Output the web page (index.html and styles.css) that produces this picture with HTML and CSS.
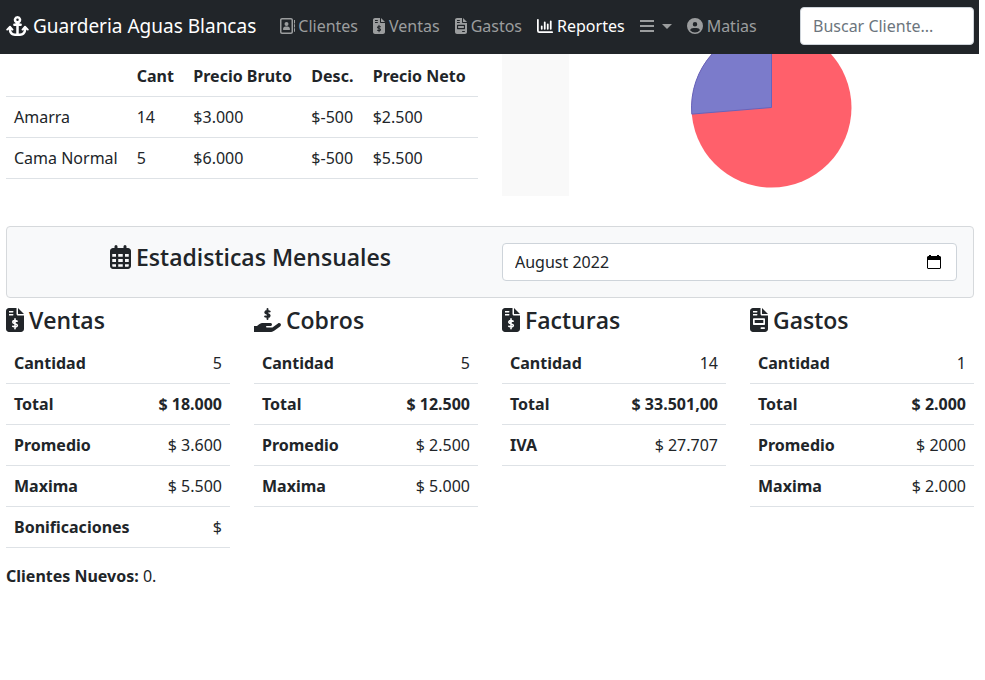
FILE: index.html
```html
<!DOCTYPE html>
<html lang="es">
<head>
<meta charset="utf-8">
<title>Guarderia Aguas Blancas</title>
<meta name="viewport" content="width=device-width, initial-scale=1">
<link rel="stylesheet" href="styles.css">
</head>
<body>
<svg class="sprite" aria-hidden="true">
  <symbol id="i-file-dollar" viewBox="0 0 384 512">
    <path fill-rule="evenodd" d="M64 0C29 0 0 29 0 64V448C0 483 29 512 64 512H320C355 512 384 483 384 448V160H256C238 160 224 146 224 128V0ZM256 0V128H384ZM64 64H144C153 64 160 71 160 80S153 96 144 96H64ZM64 128H144C153 128 160 135 160 144S153 160 144 160H64Z"/>
    <path class="cut" fill="none" stroke-width="34" stroke-linecap="round" d="M192 232V440M238 282C210 268 146 258 144 300C142 350 244 322 242 374C240 418 176 404 144 390"/>
  </symbol>
  <symbol id="i-file" viewBox="0 0 384 512">
    <path fill-rule="evenodd" d="M64 0C29 0 0 29 0 64V448C0 483 29 512 64 512H320C355 512 384 483 384 448V160H256C238 160 224 146 224 128V0ZM256 0V128H384ZM64 64H144C153 64 160 71 160 80S153 96 144 96H64ZM64 128H144C153 128 160 135 160 144S153 160 144 160H64ZM80 216H304C313 216 320 223 320 232V344C320 353 313 360 304 360H80C71 360 64 353 64 344V232C64 223 71 216 80 216ZM100 256V320H284V256ZM240 412H304C313 412 320 420 320 430S313 448 304 448H240C231 448 224 440 224 430S231 412 240 412Z"/>
  </symbol>
</svg>

<header class="navbar">
  <a class="brand" href="#">
    <svg class="icon brand-icon" viewBox="0 0 576 512" aria-hidden="true"><path fill-rule="evenodd" d="M288 0A96 96 0 0 1 339 177V192H368A32 32 0 0 1 368 256H320V448H352C405 448 448 405 448 352V349L433 364A24 24 0 0 1 399 330L463 258A24 24 0 0 1 497 258L569 330A24 24 0 0 1 535 364L512 347V352C512 440 440 512 352 512H224C136 512 64 440 64 352V347L41 364A24 24 0 0 1 7 330L79 258A24 24 0 0 1 113 258L177 330A24 24 0 0 1 143 364L128 349V352C128 405 171 448 224 448H256V256H208A32 32 0 0 1 208 192H237V177A96 96 0 0 1 288 0ZM288 64A32 32 0 1 0 288 128A32 32 0 0 0 288 64Z"/></svg>
    Guarderia Aguas Blancas
  </a>
  <nav class="links">
    <a href="#"><svg class="icon nav-icon" viewBox="0 0 512 512" aria-hidden="true"><path fill-rule="evenodd" d="M64 0H352C387 0 416 29 416 64V448C416 483 387 512 352 512H64C29 512 0 483 0 448V64C0 29 29 0 64 0ZM64 48C55 48 48 55 48 64V448C48 457 55 464 64 464H352C361 464 368 457 368 448V64C368 55 361 48 352 48Z"/><circle cx="208" cy="192" r="64"/><path d="M96 368C96 310 128 272 176 272H240C288 272 320 310 320 368C320 378 314 384 304 384H112C102 384 96 378 96 368ZM448 64H480V176H448ZM448 200H480V304H448ZM448 328H480V440H448Z"/></svg>Clientes</a>
    <a href="#" class="spaced"><svg class="icon file-icon" aria-hidden="true"><use href="#i-file-dollar"/></svg>Ventas</a>
    <a href="#" class="spaced"><svg class="icon file-icon" aria-hidden="true"><use href="#i-file"/></svg>Gastos</a>
    <a href="#" class="spaced active" aria-current="page"><svg class="icon nav-icon" viewBox="0 0 512 512" aria-hidden="true"><path fill="none" stroke="currentColor" stroke-width="56" stroke-linecap="round" stroke-linejoin="round" d="M28 56V408C28 434 42 452 72 452H484"/><path fill="none" stroke="currentColor" stroke-width="56" stroke-linecap="round" d="M152 264V344M248 136V344M344 200V344M440 104V344"/></svg>Reportes</a>
    <button type="button" class="menu" aria-label="Menu"><svg class="icon menu-icon" viewBox="0 0 14 16" aria-hidden="true"><path d="M0 2H14V4H0ZM0 7H14V9H0ZM0 12H14V14H0Z"/></svg><span class="caret"></span></button>
    <a href="#" class="spaced"><svg class="icon nav-icon" viewBox="0 0 512 512" aria-hidden="true"><path fill-rule="evenodd" d="M256 0A256 256 0 1 1 256 512A256 256 0 0 1 256 0ZM256 128A72 72 0 1 0 256 272A72 72 0 0 0 256 128ZM98 392A208 208 0 0 0 414 392C400 346 358 320 304 320H208C154 320 112 346 98 392Z"/></svg>Matias</a>
  </nav>
  <form class="search"><input class="control" type="search" placeholder="Buscar Cliente..." aria-label="Buscar Cliente"></form>
</header>

<main>
  <section class="summary">
    <div class="prices">
      <table>
        <colgroup><col class="c-name"><col class="c-count"><col class="c-gross"><col class="c-disc"><col class="c-net"></colgroup>
        <thead><tr><td></td><th scope="col">Cant</th><th scope="col">Precio Bruto</th><th scope="col">Desc.</th><th scope="col">Precio Neto</th></tr></thead>
        <tbody>
          <tr><td>Amarra</td><td>14</td><td>$3.000</td><td>$-500</td><td>$2.500</td></tr>
          <tr><td>Cama Normal</td><td>5</td><td>$6.000</td><td>$-500</td><td>$5.500</td></tr>
        </tbody>
      </table>
    </div>
    <div class="chart">
      <div class="legend"></div>
      <svg class="pie" viewBox="0 0 162 142" role="img" aria-label="Amarra 14, Cama Normal 5">
        <circle cx="81" cy="53.500" r="80" fill="#ff606b"/>
        <path d="M81 53.500V-26.500A80 80 0 0 0 1.300 60.100Z" fill="#7b7bcb" stroke="#6464bd"/>
      </svg>
    </div>
  </section>

  <section class="month">
    <h2><svg class="icon calendar-icon" viewBox="0 0 448 512" aria-hidden="true"><path fill-rule="evenodd" d="M96 32A32 32 0 0 1 160 32V64H288V32A32 32 0 0 1 352 32V64H384C419 64 448 93 448 128V448C448 483 419 512 384 512H64C29 512 0 483 0 448V128C0 93 29 64 64 64H96ZM48 192V248H128V192ZM176 192V248H272V192ZM320 192V248H400V192ZM48 296V360H128V296ZM176 296V360H272V296ZM320 296V360H400V296ZM48 408V448C48 457 55 464 64 464H128V408ZM176 408V464H272V408ZM320 408V464H384C393 464 400 457 400 448V408Z"/></svg><label for="mes">Estadisticas Mensuales</label></h2>
    <div class="control picker">
      <input id="mes" type="text" value="August 2022">
      <button type="button" aria-label="Elegir mes"><svg class="icon picker-icon" viewBox="0 0 14 14" aria-hidden="true"><path fill-rule="evenodd" d="M2 0H4V1H10V0H12V1H13L14 2V13L13 14H1L0 13V2L1 1H2ZM1 5V13H13V5Z"/></svg></button>
    </div>
  </section>

  <section class="stats">
    <article>
      <h2><svg class="icon doc-icon" aria-hidden="true"><use href="#i-file-dollar"/></svg>Ventas</h2>
      <table>
        <tr><th scope="row">Cantidad</th><td>5</td></tr>
        <tr><th scope="row">Total</th><td class="strong">$ 18.000</td></tr>
        <tr><th scope="row">Promedio</th><td>$ 3.600</td></tr>
        <tr><th scope="row">Maxima</th><td>$ 5.500</td></tr>
        <tr><th scope="row">Bonificaciones</th><td>$</td></tr>
      </table>
    </article>
    <article>
      <h2><svg class="icon hand-icon" viewBox="0 0 576 512" aria-hidden="true"><path d="M0 352H64L110 316C135 296 166 288 192 288H352C372 288 386 306 383 325C380 341 366 352 350 352H272A16 16 0 0 0 272 384H393L512 297C530 284 555 288 568 305S573 347 556 360L430 454C403 474 371 480 349 480H0Z" transform="translate(0 32)"/><path fill="none" stroke="currentColor" stroke-width="40" stroke-linecap="round" d="M288 20V236M336 76C312 60 246 48 240 90C234 140 340 116 334 168C330 208 264 196 236 180"/></svg>Cobros</h2>
      <table>
        <tr><th scope="row">Cantidad</th><td>5</td></tr>
        <tr><th scope="row">Total</th><td class="strong">$ 12.500</td></tr>
        <tr><th scope="row">Promedio</th><td>$ 2.500</td></tr>
        <tr><th scope="row">Maxima</th><td>$ 5.000</td></tr>
      </table>
    </article>
    <article>
      <h2><svg class="icon doc-icon" aria-hidden="true"><use href="#i-file-dollar"/></svg>Facturas</h2>
      <table>
        <tr><th scope="row">Cantidad</th><td>14</td></tr>
        <tr><th scope="row">Total</th><td class="strong">$ 33.501,00</td></tr>
        <tr><th scope="row">IVA</th><td>$ 27.707</td></tr>
      </table>
    </article>
    <article>
      <h2><svg class="icon doc-icon" aria-hidden="true"><use href="#i-file"/></svg>Gastos</h2>
      <table>
        <tr><th scope="row">Cantidad</th><td>1</td></tr>
        <tr><th scope="row">Total</th><td class="strong">$ 2.000</td></tr>
        <tr><th scope="row">Promedio</th><td>$ 2000</td></tr>
        <tr><th scope="row">Maxima</th><td>$ 2.000</td></tr>
      </table>
    </article>
  </section>

  <p class="new-clients"><strong>Clientes Nuevos:</strong> 0.</p>
</main>
</body>
</html>
```
FILE: styles.css
```css
* { box-sizing: border-box; }

body {
  margin: 0;
  padding-right: 6px;
  background: #fff;
  color: #212529;
  font: 16px/24px "Noto Sans", "Open Sans", sans-serif;
}

.sprite { display: none; }
.icon { display: inline-block; flex: none; fill: currentColor; }
.cut { stroke: var(--surface, #fff); }
h2, p { margin: 0; }

.navbar {
  --surface: #212529;
  display: flex;
  align-items: center;
  height: 54px;
  padding: 0 5px 2px 6px;
  background: #212529;
}
.navbar a { text-decoration: none; }
.brand {
  display: flex;
  align-items: center;
  gap: 4px;
  margin-right: 24px;
  color: #fff;
  font-size: 19px;
  line-height: 30px;
  white-space: nowrap;
}
.brand-icon { width: 23px; height: 20px; }
.links { display: flex; align-items: center; gap: 15px; }
.links a, .menu {
  display: flex;
  align-items: center;
  gap: 2px;
  color: #9b9d9e;
}
.links .spaced { gap: 4px; }
.links .active { color: #fff; }
.nav-icon { width: 16px; height: 16px; }
.file-icon { width: 12px; height: 16px; }
.menu { padding: 0; border: 0; background: none; }
.links .menu { gap: 8px; }
.menu-icon { width: 14px; height: 16px; }
.caret {
  border-top: 5px solid currentColor;
  border-right: 5px solid transparent;
  border-left: 5px solid transparent;
}
.search { width: 174px; margin-left: auto; }

.control {
  display: block;
  width: 100%;
  height: 38px;
  margin: 0;
  padding: 6px 12px;
  border: 1px solid #ced4da;
  border-radius: 4px;
  background: #fff;
  color: #212529;
  font: inherit;
}
.control::placeholder { color: #6c757d; opacity: 1; }
.picker { display: flex; align-items: center; padding-right: 15px; }
.picker input {
  flex: 1;
  min-width: 0;
  padding: 0;
  border: 0;
  background: none;
  color: inherit;
  font: inherit;
}
.picker button {
  display: flex;
  padding: 0;
  border: 0;
  background: none;
  color: #000;
}
.picker-icon { width: 14px; height: 14px; }

main { padding: 0 5px 0 6px; }

table { width: 100%; border-spacing: 0; }
th, td {
  height: 41px;
  padding: 8px;
  border-bottom: 1px solid #dee2e6;
  text-align: left;
  white-space: nowrap;
}

.summary {
  display: grid;
  grid-template-columns: 1fr 1fr;
  gap: 24px;
}
.prices { padding-top: 2px; }
.prices table { table-layout: fixed; }
.c-name { width: 26%; }
.c-count { width: 12%; }
.c-gross { width: 25%; }
.c-disc { width: 13%; }
.c-net { width: 24%; }

.chart { display: flex; height: 142px; }
.legend { width: 67px; background: #f9f9f9; }
.pie { display: block; flex: 1; height: 142px; }

.month {
  display: grid;
  grid-template-columns: 1fr 1fr;
  gap: 24px;
  margin: 30px 0 8px;
  padding: 16px;
  border: 1px solid #d6d9dc;
  border-radius: 4px;
  background: #f8f9fa;
}
h2 {
  display: flex;
  align-items: center;
  gap: 5px;
  font: 600 23px/28px "Open Sans", "Noto Sans", sans-serif;
}
.month h2 { justify-content: center; align-self: start; }
.calendar-icon { width: 21px; height: 24px; }
.doc-icon { width: 18px; height: 24px; }
.hand-icon { width: 27px; height: 24px; }

.stats {
  display: grid;
  grid-template-columns: repeat(4, 1fr);
  gap: 24px;
}
.stats h2 { margin-bottom: 9px; }
.stats td { text-align: right; }
.strong { font-weight: 700; }
.new-clients { margin-top: 16px; }
```
